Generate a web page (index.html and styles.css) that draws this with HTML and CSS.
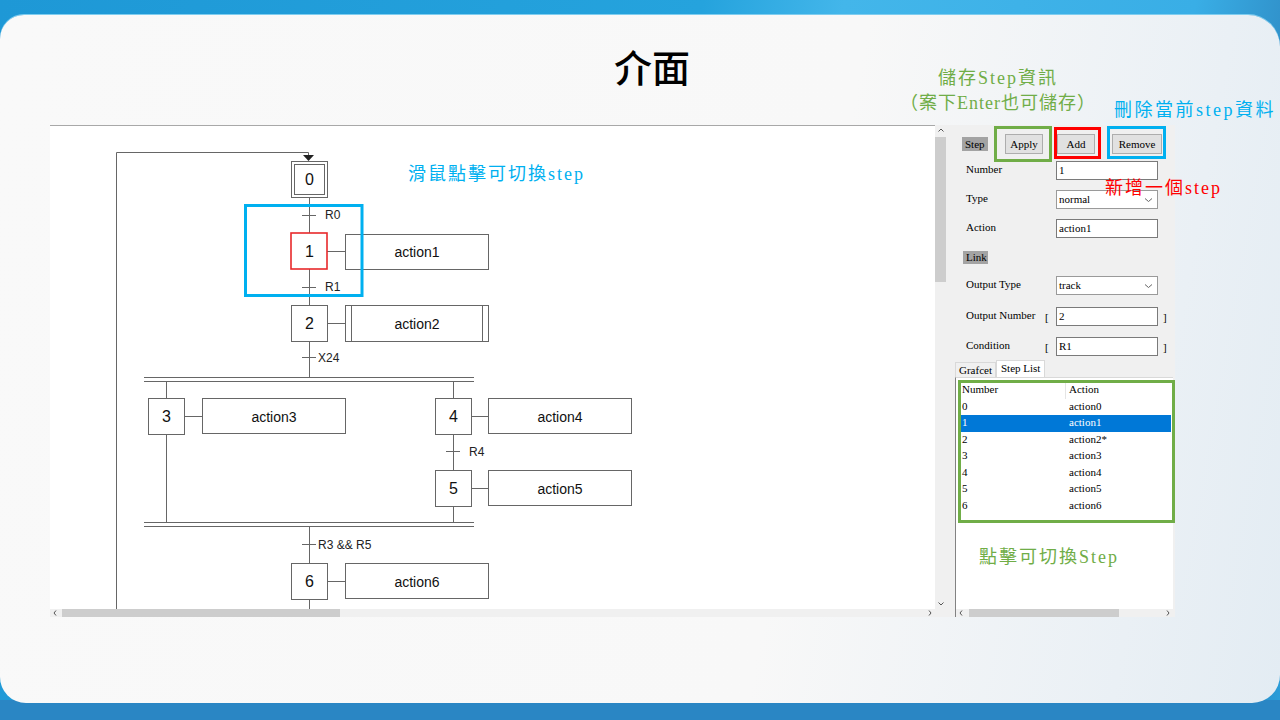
FILE: index.html
```html
<!DOCTYPE html>
<html lang="zh-Hant">
<head>
<meta charset="utf-8">
<title>介面</title>
<link rel="stylesheet" href="styles.css">
</head>
<body>
<div class="slide">
  <div class="card">
    <h1 class="title">介面</h1>
    <div class="app">
      <div class="canvas-area">
        <div class="canvas">
          <svg class="diagram" width="885" height="484" viewBox="50 125 885 484" xmlns="http://www.w3.org/2000/svg">
            <g stroke="#666" stroke-width="1" fill="none">
              <path d="M116.5 609 V152.5 H308.5 V157"/>
              <rect x="291.5" y="161.5" width="36" height="36"/>
              <rect x="294.5" y="164.5" width="30" height="30"/>
              <path d="M309.5 197 V233 M309.5 269 V305 M309.5 341 V377 M309.5 526 V563 M309.5 599 V609"/>
              <path d="M302 215.5 H316 M302 287.5 H316 M302 357.5 H316 M302 544.5 H316 M446 451.5 H460" stroke-width="1.2"/>
              <path d="M327 251.5 H345 M327 323.5 H345 M184 416.5 H202 M471 416.5 H488 M471 488.5 H488 M327 581.5 H345"/>
              <rect x="345.5" y="234.5" width="143" height="35"/>
              <rect x="291.5" y="305.5" width="36" height="36"/>
              <rect x="345.5" y="305.5" width="143" height="36"/>
              <path d="M351.5 305.5 V341.5 M482.5 305.5 V341.5"/>
              <path d="M144 377.5 H474 M144 381.5 H474 M144 522.5 H474 M144 526.5 H474"/>
              <path d="M166.5 381 V398 M453.5 381 V398 M166.5 434 V522 M453.5 434 V470 M453.5 506 V522"/>
              <rect x="148.5" y="398.5" width="36" height="36"/>
              <rect x="202.5" y="398.5" width="143" height="35"/>
              <rect x="435.5" y="398.5" width="36" height="36"/>
              <rect x="488.5" y="398.5" width="143" height="35"/>
              <rect x="435.5" y="470.5" width="36" height="36"/>
              <rect x="488.5" y="470.5" width="143" height="35"/>
              <rect x="291.5" y="563.5" width="36" height="36"/>
              <rect x="345.5" y="563.5" width="143" height="35"/>
            </g>
            <polygon points="303,155 314,155 308.5,161" fill="#222"/>
            <rect x="291" y="233" width="36" height="36" fill="none" stroke="#e8282b" stroke-width="1.6"/>
            <rect x="245.5" y="205.5" width="116.5" height="90" fill="none" stroke="#00b0f0" stroke-width="3"/>
            <g class="num" text-anchor="middle">
              <text x="309.5" y="185">0</text>
              <text x="309.5" y="257">1</text>
              <text x="309.5" y="329">2</text>
              <text x="166.5" y="422">3</text>
              <text x="453.5" y="422">4</text>
              <text x="453.5" y="494">5</text>
              <text x="309.5" y="587">6</text>
            </g>
            <g class="act" text-anchor="middle">
              <text x="417" y="257">action1</text>
              <text x="417" y="329">action2</text>
              <text x="274" y="422">action3</text>
              <text x="560" y="422">action4</text>
              <text x="560" y="494">action5</text>
              <text x="417" y="587">action6</text>
            </g>
            <g class="cond">
              <text x="325" y="219">R0</text>
              <text x="325" y="291">R1</text>
              <text x="318" y="362">X24</text>
              <text x="469" y="456">R4</text>
              <text x="318" y="549">R3 &amp;&amp; R5</text>
            </g>
          </svg>
        </div>
        <div class="vscroll">
          <svg class="chev" width="12" height="10" viewBox="0 0 12 10"><path d="M3.5 6.5 L6 4 L8.5 6.5" stroke="#555" fill="none"/></svg>
          <div class="vthumb"></div>
          <div class="vfill"></div>
          <svg class="chev" width="12" height="10" viewBox="0 0 12 10"><path d="M3.5 3.5 L6 6 L8.5 3.5" stroke="#555" fill="none"/></svg>
        </div>
        <div class="hscroll">
          <svg class="chev-h" width="10" height="8" viewBox="0 0 10 8"><path d="M6 1.5 L4 4 L6 6.5" stroke="#555" fill="none"/></svg>
          <div class="hthumb"></div>
          <div class="hfill"></div>
          <svg class="chev-h" width="10" height="8" viewBox="0 0 10 8"><path d="M4 1.5 L6 4 L4 6.5" stroke="#555" fill="none"/></svg>
        </div>
        <div class="corner"></div>
      </div>

      <div class="panel">
        <div class="p-top">
          <span class="tag">Step</span>
          <button class="btn btn-apply">Apply</button>
          <button class="btn btn-add">Add</button>
          <button class="btn btn-remove">Remove</button>
        </div>
        <div class="row r-number"><span class="lbl">Number</span><span class="field">1</span></div>
        <div class="row r-gap"><span class="lbl">Type</span><span class="field select">normal<svg class="dd" width="9" height="6" viewBox="0 0 9 6"><path d="M1 1.5 L4.5 4.5 L8 1.5" stroke="#666" fill="none"/></svg></span></div>
        <div class="row r-gap"><span class="lbl">Action</span><span class="field">action1</span></div>
        <div class="link-row"><span class="tag">Link</span></div>
        <div class="row r-otype"><span class="lbl">Output Type</span><span class="field select">track<svg class="dd" width="9" height="6" viewBox="0 0 9 6"><path d="M1 1.5 L4.5 4.5 L8 1.5" stroke="#666" fill="none"/></svg></span></div>
        <div class="row r-onum"><span class="lbl lbl-short">Output Number</span><span class="brk">[</span><span class="field">2</span><span class="brk-r">]</span></div>
        <div class="row r-cond"><span class="lbl lbl-short">Condition</span><span class="brk">[</span><span class="field">R1</span><span class="brk-r">]</span></div>
        <div class="tabs">
          <span class="tab">Grafcet</span>
          <span class="tab active">Step List</span>
        </div>
        <div class="list">
          <div class="lrow lhead"><span class="c1">Number</span><span class="c2">Action</span></div>
          <div class="lrow"><span class="c1">0</span><span class="c2">action0</span></div>
          <div class="lrow sel"><span class="c1">1</span><span class="c2">action1</span></div>
          <div class="lrow"><span class="c1">2</span><span class="c2">action2*</span></div>
          <div class="lrow"><span class="c1">3</span><span class="c2">action3</span></div>
          <div class="lrow"><span class="c1">4</span><span class="c2">action4</span></div>
          <div class="lrow"><span class="c1">5</span><span class="c2">action5</span></div>
          <div class="lrow"><span class="c1">6</span><span class="c2">action6</span></div>
          <div class="list-space"></div>
          <div class="list-hscroll">
            <svg class="chev-h" width="10" height="8" viewBox="0 0 10 8"><path d="M6 1.5 L4 4 L6 6.5" stroke="#555" fill="none"/></svg>
            <div class="lthumb"></div>
            <div class="hfill"></div>
            <svg class="chev-h" width="10" height="8" viewBox="0 0 10 8"><path d="M4 1.5 L6 4 L4 6.5" stroke="#555" fill="none"/></svg>
          </div>
        </div>
      </div>
    </div>

    <div class="note note-save">儲存Step資訊</div>
    <div class="note note-enter">（案下Enter也可儲存）</div>
    <div class="note note-del">刪除當前step資料</div>
    <div class="note note-add">新增一個step</div>
    <div class="note note-click">滑鼠點擊可切換step</div>
    <div class="note note-list">點擊可切換Step</div>
    <div class="hl hl-apply"></div>
    <div class="hl hl-add"></div>
    <div class="hl hl-remove"></div>
    <div class="hl hl-list"></div>
  </div>
</div>
</body>
</html>
```

FILE: styles.css
```css
* { box-sizing: border-box; }
html, body { margin: 0; padding: 0; }
body {
  width: 1280px;
  height: 720px;
  overflow: hidden;
  font-family: "Liberation Sans", Arial, sans-serif;
}
.slide {
  width: 1280px;
  height: 720px;
  padding-top: 15px;
  background:
    linear-gradient(180deg, rgba(0,0,0,0) 0 700px, #2a86c4 700px 720px),
    linear-gradient(100deg, #1e98d6 0%, #25a3dd 50%, #43b6ea 60%, #39aee6 85%, #2b7fb8 96%, #2aa0dc 100%);
}
.card {
  position: relative;
  width: 1280px;
  height: 688px;
  border-radius: 24px 32px 28px 26px;
  background: linear-gradient(100deg, #f9f9f9 0%, #f8f8f8 62%, #eaf0f5 88%, #e3ecf3 100%);
  box-shadow: 0 -1px 0 #7fcdef;
}
.title {
  margin: 0;
  padding-top: 27px;
  height: 110px;
  text-align: center;
  font-family: "Noto Sans CJK TC", "Noto Sans CJK SC", sans-serif;
  font-weight: 500;
  font-size: 38px;
  line-height: 48px;
  color: #000;
  padding-left: 24px;
}

/* application window */
.app {
  margin-left: 50px;
  width: 1125px;
  height: 492px;
  display: flex;
}
.canvas-area {
  display: grid;
  grid-template-columns: 885px 12px;
  grid-template-rows: 484px 8px;
}
.canvas {
  background: #fff;
  border-top: 1px solid #a8a8a8;
  overflow: hidden;
}
.diagram { display: block; margin-top: -1px; }
.num { font-family: "Liberation Sans", Arial, sans-serif; font-size: 16px; fill: #111; }
.act { font-family: "Liberation Sans", Arial, sans-serif; font-size: 14px; fill: #111; }
.cond { font-family: "Liberation Sans", Arial, sans-serif; font-size: 12px; fill: #222; }

.vscroll {
  background: #f0f0f0;
  display: flex;
  flex-direction: column;
  align-items: center;
}
.chev { display: block; flex: none; }
.vthumb {
  width: 11px;
  height: 145px;
  margin-left: -1px;
  margin-top: 2px;
  background: #cdcdcd;
}
.vfill { flex: 1; }
.hscroll {
  background: #f0f0f0;
  display: flex;
  align-items: center;
}
.chev-h { display: block; flex: none; }
.hthumb {
  width: 278px;
  height: 8px;
  margin-left: 2px;
  background: #cdcdcd;
}
.hfill { flex: 1; }
.corner { background: #f0f0f0; }

/* side panel */
.panel {
  width: 228px;
  height: 492px;
  background: #f0f0f0;
  font-family: "Liberation Serif", "Times New Roman", serif;
  font-size: 11px;
  color: #000;
  display: flex;
  flex-direction: column;
}
.p-top {
  display: flex;
  align-items: center;
  height: 20px;
  margin-top: 9px;
  padding-left: 15px;
}
.tag {
  display: inline-block;
  background: #a3a3a3;
  padding: 0 3px;
  height: 14px;
  line-height: 14px;
  width: 26px;
}
.btn {
  font-family: "Liberation Serif", "Times New Roman", serif;
  font-size: 11px;
  color: #000;
  height: 20px;
  padding: 0;
  background: #e1e1e1;
  border: 1px solid #adadad;
  border-radius: 0;
}
.btn-apply { width: 38px; margin-left: 17px; }
.btn-add { width: 38px; margin-left: 14px; }
.btn-remove { width: 50px; margin-left: 17px; }

.row {
  display: flex;
  align-items: center;
  height: 19px;
  padding-left: 19px;
}
.r-number { margin-top: 7px; }
.r-gap { margin-top: 10px; }
.lbl { width: 90px; flex: none; margin-top: -4px; }
.lbl-short { width: 79px; }
.brk { width: 11px; flex: none; }
.brk-r { margin-left: 5px; }
.field {
  position: relative;
  width: 102px;
  height: 19px;
  line-height: 17px;
  padding-left: 2px;
  background: #fff;
  border: 1px solid #7a7a7a;
  flex: none;
}
.select { border-color: #9a9a9a; }
.dd { position: absolute; right: 4px; top: 6px; }
.link-row {
  margin-top: 13px;
  padding-left: 16px;
  height: 12px;
  display: flex;
  align-items: center;
}
.link-row .tag { height: 13px; line-height: 13px; width: 25px; }
.r-otype { margin-top: 13px; }
.r-onum { margin-top: 12px; }
.r-cond { margin-top: 11px; }

.tabs {
  margin-top: 4px;
  padding-left: 8px;
  height: 17px;
  display: flex;
  align-items: flex-end;
}
.tab {
  height: 15px;
  line-height: 14px;
  padding: 0 3px;
  border: 1px solid #d9d9d9;
  border-bottom: none;
  background: #f0f0f0;
}
.tab.active {
  height: 17px;
  line-height: 15px;
  background: #fff;
  padding: 0 4px;
}
.list {
  margin-left: 8px;
  width: 218px;
  flex: 1;
  background: #fff;
  border-left: 1px solid #828282;
  border-top: 1px solid #d9d9d9;
  display: flex;
  flex-direction: column;
  padding-top: 4px;
}
.lrow {
  display: flex;
  height: 16.5px;
  line-height: 15px;
  margin-left: 4px;
  margin-right: 2px;
  padding-left: 2px;
}
.lhead .c2 { border-left: 1px solid #e5e5e5; padding-left: 3px; margin-left: -4px; }
.c1 { width: 107px; flex: none; }
.sel { background: #0078d7; color: #fff; }
.list-space { flex: 1; }
.list-hscroll {
  height: 8px;
  background: #f0f0f0;
  display: flex;
  align-items: center;
}
.lthumb {
  width: 150px;
  height: 8px;
  margin-left: 3px;
  background: #cdcdcd;
}

/* annotations */
.note {
  position: absolute;
  font-family: "Liberation Serif", "Noto Sans CJK TC", serif;
  font-size: 18px;
  line-height: 24px;
  letter-spacing: 2px;
  white-space: nowrap;
}
.note-save { left: 938px; top: 51px; color: #70ad47; }
.note-enter { left: 900px; top: 76px; color: #70ad47; letter-spacing: 1px; }
.note-del { left: 1114px; top: 83px; color: #00b0f0; letter-spacing: 2.5px; }
.note-add { left: 1105px; top: 161px; color: #ff0000; }
.note-click { left: 408px; top: 147px; color: #00b0f0; }
.note-list { left: 979px; top: 530px; color: #70ad47; }
.hl {
  position: absolute;
  border: 3px solid;
}
.hl-apply { left: 994px; top: 111px; width: 58px; height: 36px; border-color: #70ad47; }
.hl-add { left: 1054px; top: 112px; width: 47px; height: 32px; border-color: #ff0000; }
.hl-remove { left: 1107px; top: 111px; width: 59px; height: 33px; border-color: #00b0f0; }
.hl-list { left: 958px; top: 365px; width: 217px; height: 143px; border-color: #70ad47; }
```
